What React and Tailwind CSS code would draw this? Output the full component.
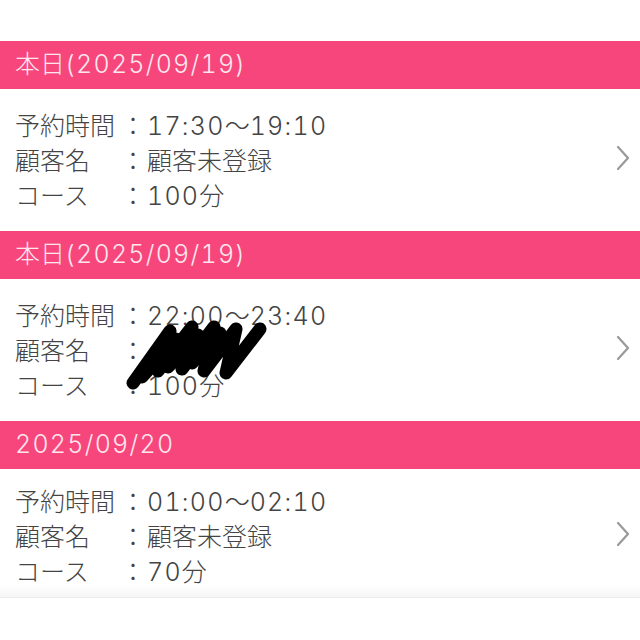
import React from 'react'

const RESERVATIONS = [
  { date: '本日(2025/09/19)', time: '17:30〜19:10', name: '顧客未登録', course: '100分' },
  { date: '本日(2025/09/19)', time: '22:00〜23:40', name: '', course: '100分', hidden: true },
  { date: '2025/09/20', time: '01:00〜02:10', name: '顧客未登録', course: '70分' },
]

// Latin runs: tabular digits plus a little spacing, like the original font
function Txt({ children }) {
  const parts = String(children).split(/([\x20-\x7e]+)/).filter(Boolean)
  return parts.map((p, i) =>
    /^[\x20-\x7e]+$/.test(p) ? (
      <span key={i} className="tabular-nums tracking-[0.05em]">{p}</span>
    ) : (
      <span key={i}>{p}</span>
    )
  )
}

function Scribble() {
  return (
    <svg className="absolute left-[124px] top-[38px] pointer-events-none" width="150" height="74" viewBox="0 0 150 74">
      <g stroke="#000" strokeWidth="13" strokeLinecap="round" strokeLinejoin="round" fill="none">
        <path d="M9 66 L46 14 L34 54 L68 10 L58 52 L90 10 L80 54 L112 12 L102 56 L136 12" />
        <path d="M18 60 L52 22" />
        <path d="M44 50 L74 18" />
        <path d="M68 46 L96 16" />
      </g>
    </svg>
  )
}

function Row({ label, value }) {
  return (
    <div className="flex items-center h-[35px] whitespace-nowrap">
      <span className="w-[104px]">{label}</span>
      <span className="w-[28px] text-center">：</span>
      <span><Txt>{value}</Txt></span>
    </div>
  )
}

export default function App() {
  return (
    <div
      className="w-[640px] h-[640px] bg-white pt-[41px] text-[#444444] text-[25px] overflow-hidden"
      style={{ fontFamily: 'Inter, "Noto Sans CJK JP", sans-serif' }}
    >
      {RESERVATIONS.map((r, i) => (
        <div key={i}>
          {/* Date header */}
          <div className="h-[48px] bg-[#f6467c] flex items-center px-[15px] text-[#ffe6ee] font-light whitespace-nowrap">
            <Txt>{r.date}</Txt>
          </div>

          {/* Reservation body */}
          <div
            className={
              'relative flex items-center pl-[15px] pr-[8px] ' +
              (i === 2
                ? 'h-[129px] pt-[10px] border-b border-[#ececec] bg-gradient-to-b from-white from-90% to-[#f6f6f6]'
                : 'h-[142px] pt-[4px]')
            }
          >
            <div className="flex-1 font-light">
              <Row label="予約時間" value={r.time} />
              <Row label="顧客名" value={r.name} />
              <Row label="コース" value={r.course} />
            </div>
            <svg width="18" height="28" viewBox="0 0 18 28" className="-mt-[8px]">
              <path d="M4 3 L14 14 L4 25" stroke="#999999" strokeWidth="2.2" fill="none" strokeLinecap="round" strokeLinejoin="round" />
            </svg>
            {r.hidden && <Scribble />}
          </div>
        </div>
      ))}
    </div>
  )
}
